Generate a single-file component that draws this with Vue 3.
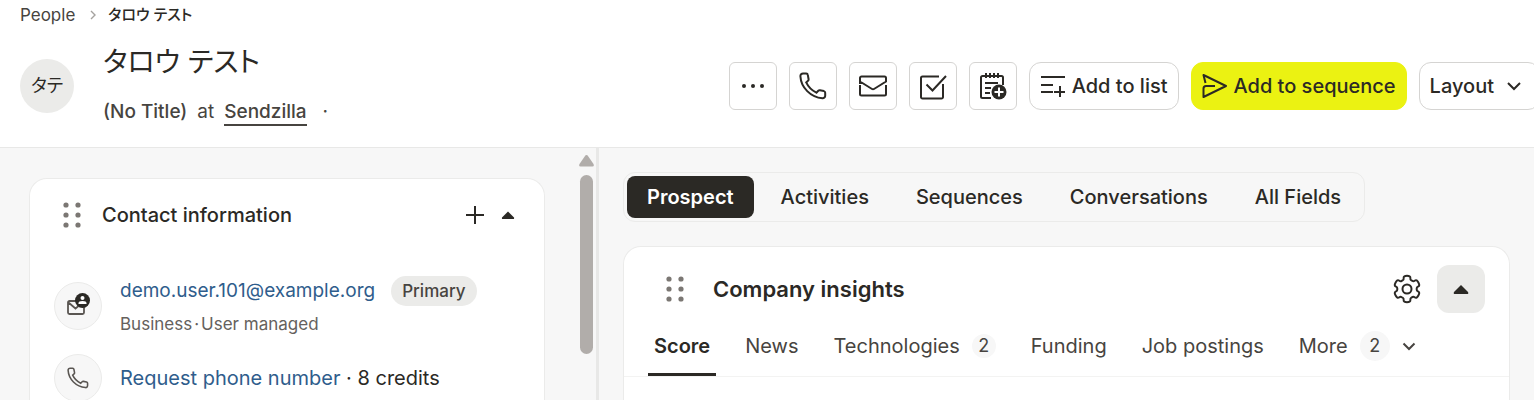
<script setup>
const segments = ['Prospect', 'Activities', 'Sequences', 'Conversations', 'All Fields']
const insights = [
  { label: 'Score' },
  { label: 'News' },
  { label: 'Technologies', count: 2 },
  { label: 'Funding' },
  { label: 'Job postings' },
]

// Six-tooth gear outline, rounded by running quadratics through edge midpoints.
const gearPoints = []
for (let tooth = 0; tooth < 6; tooth++) {
  for (const [offset, radius] of [[-15, 13.6], [15, 13.6], [19, 9.8], [30, 9.8], [41, 9.8]]) {
    const angle = ((tooth * 60 + offset - 90) * Math.PI) / 180
    gearPoints.push([16 + radius * Math.cos(angle), 16 + radius * Math.sin(angle)])
  }
}
const mid = (a, b) => `${((a[0] + b[0]) / 2).toFixed(2)} ${((a[1] + b[1]) / 2).toFixed(2)}`
const gearPath =
  `M${mid(gearPoints[gearPoints.length - 1], gearPoints[0])}` +
  gearPoints
    .map((p, i) => `Q${p[0].toFixed(2)} ${p[1].toFixed(2)} ${mid(p, gearPoints[(i + 1) % gearPoints.length])}`)
    .join('') +
  'Z'
</script>

<template>
  <div class="page">
    <header class="header">
      <nav class="crumbs" aria-label="Breadcrumb">
        <a href="#people">People</a>
        <svg width="8" height="10" viewBox="0 0 8 10"><path d="M2 1l4 4-4 4" fill="none" stroke="#a5a29f" stroke-width="1.4" /></svg>
        <span class="current">タロウ テスト</span>
      </nav>
      <div class="profile">
        <div class="avatar">タテ</div>
        <div class="identity">
          <h1>タロウ テスト</h1>
          <p><span class="role">(No Title)</span><span>at</span><a href="#sendzilla">Sendzilla</a><span class="sep">·</span></p>
        </div>
        <div class="actions">
          <button class="square" aria-label="More actions">
            <svg width="28" height="28" viewBox="0 0 28 28"><g fill="#2b2925"><circle cx="5" cy="14" r="2" /><circle cx="14" cy="14" r="2" /><circle cx="23" cy="14" r="2" /></g></svg>
          </button>
          <button class="square" aria-label="Call">
            <svg width="28" height="28" viewBox="0 0 28 28" class="line"><path d="M4 1.500h3.200c.8 0 1.500.6 1.600 1.400l.8 4.300c.1.600-.1 1.200-.6 1.600L7.200 10.400c2 4.300 5.600 8 10.200 10.300l1.900-1.900c.4-.4 1-.6 1.600-.5l4 .8c.8.2 1.300.8 1.300 1.600v3c0 1.500-1.200 2.600-2.700 2.500C11.600 25.300 2 15.500 1.400 4.200 1.300 2.700 2.500 1.500 4 1.500z" /></svg>
          </button>
          <button class="square" aria-label="Email">
            <svg width="28" height="28" viewBox="0 0 28 28" class="line"><path d="M1 12V6a1.500 1.500 0 0 1 1.500-1.500h23A1.500 1.500 0 0 1 27 6v3.500L15 17a2 2 0 0 1-2 0L1 9.500M1 13v9a1.500 1.500 0 0 0 1.500 1.500h23A1.500 1.500 0 0 0 27 22v-9" /></svg>
          </button>
          <button class="square" aria-label="Create task">
            <svg width="28" height="28" viewBox="0 0 28 28" class="line"><path d="M20 4.500H3.500A1.500 1.500 0 0 0 2 6v19a1.500 1.500 0 0 0 1.500 1.500h19A1.500 1.500 0 0 0 24 25V12M7.500 12.500l6 6L27 4" /></svg>
          </button>
          <button class="square" aria-label="Add note">
            <svg width="28" height="28" viewBox="0 0 28 28" class="line"><path d="M24 13V5.500A1.500 1.500 0 0 0 22.500 4h-19A1.500 1.500 0 0 0 2 5.500v19A1.500 1.500 0 0 0 3.500 26H12M7 1v5M11 1v5M15 1v5M19 1v5M6 11h13M6 16h6M6 21h5" /><circle cx="20" cy="20" r="7.500" fill="#2b2925" stroke="none" /><path d="M20 15.500v9M15.500 20h9" stroke="#fff" /></svg>
          </button>
          <button class="wide">
            <svg width="26" height="26" viewBox="0 0 26 26" class="line"><path d="M1 4h24M1 12h12M1 19h12M20 13v11M14 19h11" /></svg>
            Add to list
          </button>
          <button class="wide primary">
            <svg width="26" height="26" viewBox="0 0 26 26" class="line"><path d="M3.500 10L1.500 2 24 13 1.500 24V15.500Q1.500 13 4 13h9" stroke-linejoin="round" /></svg>
            Add to sequence
          </button>
          <button class="wide">
            Layout
            <svg width="14" height="14" viewBox="0 0 14 14" class="line chev"><path d="M1 4l6 6 6-6" /></svg>
          </button>
        </div>
      </div>
    </header>

    <main class="body">
      <aside class="side">
        <section class="card contact">
          <div class="cardhead">
            <svg class="grip" width="18" height="28" viewBox="0 0 18 28"><g fill="#7b7773"><circle cx="3" cy="4" r="2.600" /><circle cx="15" cy="4" r="2.600" /><circle cx="3" cy="14" r="2.600" /><circle cx="15" cy="14" r="2.600" /><circle cx="3" cy="24" r="2.600" /><circle cx="15" cy="24" r="2.600" /></g></svg>
            <h2>Contact information</h2>
            <button class="plain" aria-label="Add contact information"><svg width="20" height="20" viewBox="0 0 20 20" class="line"><path d="M10 1v18M1 10h18" /></svg></button>
            <button class="plain" aria-label="Collapse"><svg width="14" height="8" viewBox="0 0 14 8"><path d="M7 .5L13 6.500Q13.500 8 12 8H2Q.5 8 1 6.500z" fill="#2b2925" /></svg></button>
          </div>
          <div class="row">
            <span class="bubble">
              <svg width="26" height="26" viewBox="0 0 26 26"><path d="M11 8H4.500A1.500 1.500 0 0 0 3 9.500v10A1.500 1.500 0 0 0 4.500 21h13a1.500 1.500 0 0 0 1.500-1.500V13M3.500 9.500l7 6 3-2.500" fill="none" stroke="#5a5652" stroke-width="1.800" /><circle cx="17.500" cy="7.500" r="7.500" fill="#2b2925" /><circle cx="17.500" cy="5" r="2" fill="#fff" /><path d="M13.500 11v-1q0-2 4-2t4 2v1z" fill="#fff" /></svg>
            </span>
            <div class="info">
              <div class="mail"><a href="mailto:demo.user.101@example.org">demo.user.101@example.org</a><span class="tag">Primary</span></div>
              <div class="meta"><span>Business</span><span>·</span><span>User managed</span></div>
            </div>
          </div>
          <div class="row">
            <span class="bubble">
              <svg width="22" height="22" viewBox="0 0 28 28" class="line soft"><path d="M4 1.500h3.200c.8 0 1.500.6 1.600 1.400l.8 4.300c.1.600-.1 1.200-.6 1.600L7.200 10.400c2 4.300 5.600 8 10.200 10.300l1.900-1.900c.4-.4 1-.6 1.600-.5l4 .8c.8.2 1.300.8 1.300 1.600v3c0 1.500-1.200 2.600-2.700 2.500C11.600 25.300 2 15.500 1.400 4.200 1.300 2.700 2.500 1.500 4 1.500z" /></svg>
            </span>
            <div class="phone"><a href="#request">Request phone number</a> · 8 credits</div>
          </div>
        </section>
        <div class="scroll">
          <svg width="15" height="12" viewBox="0 0 15 12"><path d="M7.500 0Q8.500 0 9 1L14.500 9Q15.500 11.500 13.500 11.500h-12Q-.5 11.500 .5 9L6 1Q6.500 0 7.500 0z" fill="#b1adaa" /></svg>
          <div class="thumb"></div>
        </div>
      </aside>

      <section class="content">
        <nav class="segments" aria-label="Record views">
          <button v-for="(s, i) in segments" :key="s" :class="{ on: i === 0 }">{{ s }}</button>
        </nav>
        <section class="card insights">
          <div class="cardhead">
            <svg class="grip" width="18" height="28" viewBox="0 0 18 28"><g fill="#7b7773"><circle cx="3" cy="4" r="2.600" /><circle cx="15" cy="4" r="2.600" /><circle cx="3" cy="14" r="2.600" /><circle cx="15" cy="14" r="2.600" /><circle cx="3" cy="24" r="2.600" /><circle cx="15" cy="24" r="2.600" /></g></svg>
            <h2>Company insights</h2>
            <button class="plain gear" aria-label="Settings"><svg width="32" height="32" viewBox="0 0 32 32" class="line"><path :d="gearPath" /><circle cx="16" cy="16" r="4.500" /></svg></button>
            <button class="fold" aria-label="Collapse"><svg width="16" height="9" viewBox="0 0 16 9"><path d="M8 0L15 7Q16 9 14 9H2Q0 9 1 7z" fill="#2b2925" /></svg></button>
          </div>
          <nav class="tabs" aria-label="Company insights">
            <button v-for="(t, i) in insights" :key="t.label" :class="{ on: i === 0 }">{{ t.label }}<span v-if="t.count" class="count">{{ t.count }}</span></button>
            <button>More<span class="count big">2</span><svg width="14" height="14" viewBox="0 0 14 14" class="line chev"><path d="M1.500 4.500L7 10l5.500-5.500" /></svg></button>
          </nav>
        </section>
      </section>
    </main>
  </div>
</template>

<style>
body { margin: 0; }
</style>

<style scoped>
* { box-sizing: border-box; }
.page {
  height: 100vh; display: flex; flex-direction: column; overflow: hidden; background: #fff; color: #2b2925;
  font-family: Inter, "Noto Sans CJK JP", sans-serif; font-size: 20px; line-height: 28px;
}
button { font: inherit; color: inherit; background: none; border: 0; padding: 0; margin: 0; display: flex; align-items: center; white-space: nowrap; }
a { color: inherit; text-decoration: none; }
h1, h2, p { margin: 0; font-weight: 400; }
svg { flex: none; display: block; }
.line { fill: none; stroke: #2b2925; stroke-width: 2; }
.header { flex: none; height: 148px; border-bottom: 1px solid #e8e8e7; padding-left: 20px; }
.crumbs { display: flex; align-items: center; height: 30px; font-size: 17px; line-height: 24px; color: #474440; }
.crumbs svg { margin: 0 11px 0 14px; }
.current { font-size: 15px; font-weight: 500; color: #2b2925; font-feature-settings: "palt"; }
.profile { display: flex; align-items: center; height: 112px; }
.avatar { flex: none; width: 54px; height: 54px; border-radius: 50%; background: #ebebe9; display: flex; align-items: center; justify-content: center; font-size: 18px; font-feature-settings: "palt"; }
.identity { margin-left: 29px; padding-bottom: 5px; flex: 1; min-width: 0; }
h1 { font-size: 28px; line-height: 42px; margin-bottom: 15px; font-feature-settings: "palt"; }
.identity p { display: flex; align-items: baseline; gap: 10px; font-size: 19px; color: #474440; }
.identity p a { border-bottom: 2px solid #474440; line-height: 24px; font-weight: 500; }
.role { font-weight: 500; }
.sep { margin-left: 6px; }
.actions { flex: none; display: flex; gap: 12px; margin-right: -6px; }
.square { width: 48px; height: 48px; justify-content: center; border: 1px solid #d5d4d2; border-radius: 6px; }
.wide { height: 48px; gap: 6px; padding: 0 10px; border: 1px solid #d5d4d2; border-radius: 12px; font-weight: 500; }
.wide .chev { margin-left: 7px; margin-right: 8px; }
.primary { background: #ebf212; border-color: #ebf212; }
.body { flex: 1; min-height: 0; display: flex; background: #f7f7f7; }
.side { flex: none; width: 39.05%; display: flex; border-right: 3px solid #e8e8e7; padding-left: 29px; }
.card { background: #fff; border: 1px solid #ebebea; border-bottom: 0; border-radius: 18px 18px 0 0; }
.contact { flex: 1; margin-top: 30px; margin-right: 34px; padding: 0 29px 0 24px; }
.cardhead { display: flex; align-items: center; }
.cardhead h2 { flex: 1; }
.contact .cardhead { height: 72px; margin-bottom: 19px; padding-left: 9px; }
.contact h2 { margin-left: 21px; font-size: 20px; font-weight: 500; }
.plain + .plain { margin-left: 16px; }
.row { display: flex; align-items: center; height: 72px; }
.bubble { flex: none; width: 48px; height: 48px; border: 1px solid #ebebea; border-radius: 50%; background: #f7f7f7; display: flex; align-items: center; justify-content: center; margin-right: 18px; }
.soft { stroke: #5a5652; }
.row a { color: #2f5d8c; }
.mail { display: flex; align-items: center; gap: 16px; font-size: 19px; }
.tag { height: 30px; padding: 0 11px; border-radius: 15px; background: #ebebe9; font-size: 17px; line-height: 30px; font-weight: 500; color: #474440; }
.meta { display: flex; gap: 2px; margin-top: 6px; font-size: 17px; line-height: 24px; color: #65615d; }
.scroll { flex: none; width: 17px; padding-top: 7px; }
.thumb { width: 13px; height: 179px; margin: 8px 0 0 1px; border-radius: 7px; background: #b1adaa; }
.content { flex: 1; min-width: 0; padding: 24px 24px 0; display: flex; flex-direction: column; }
.segments { align-self: flex-start; display: flex; gap: 7px; height: 50px; padding: 3px; border: 1px solid #ebebea; border-radius: 12px; }
.segments button { padding: 0 20px; border-radius: 8px; font-weight: 500; }
.segments .on { background: #2b2925; color: #fff; font-weight: 600; }
.insights { flex: 1; margin-top: 24px; }
.insights .cardhead { height: 84px; padding: 0 24px 0 42px; }
.insights h2 { margin-left: 29px; font-size: 22px; font-weight: 600; }
.gear { margin-right: 14px; }
.fold { width: 48px; height: 48px; border-radius: 12px; background: #ebebe9; justify-content: center; }
.tabs { display: flex; gap: 23px; height: 46px; padding-left: 24px; border-bottom: 1px solid #f3f3f2; }
.tabs button { padding: 0 6px 12px; color: #474440; border-bottom: 3px solid transparent; }
.tabs .on { font-weight: 600; color: #2b2925; border-color: #2b2925; }
.count { width: 24px; height: 24px; line-height: 24px; margin-left: 12px; border-radius: 50%; background: #f7f7f7; font-size: 18px; text-align: center; }
.big { width: 30px; height: 30px; line-height: 30px; }
.tabs .chev { margin-left: 12px; stroke: #474440; }
</style>
